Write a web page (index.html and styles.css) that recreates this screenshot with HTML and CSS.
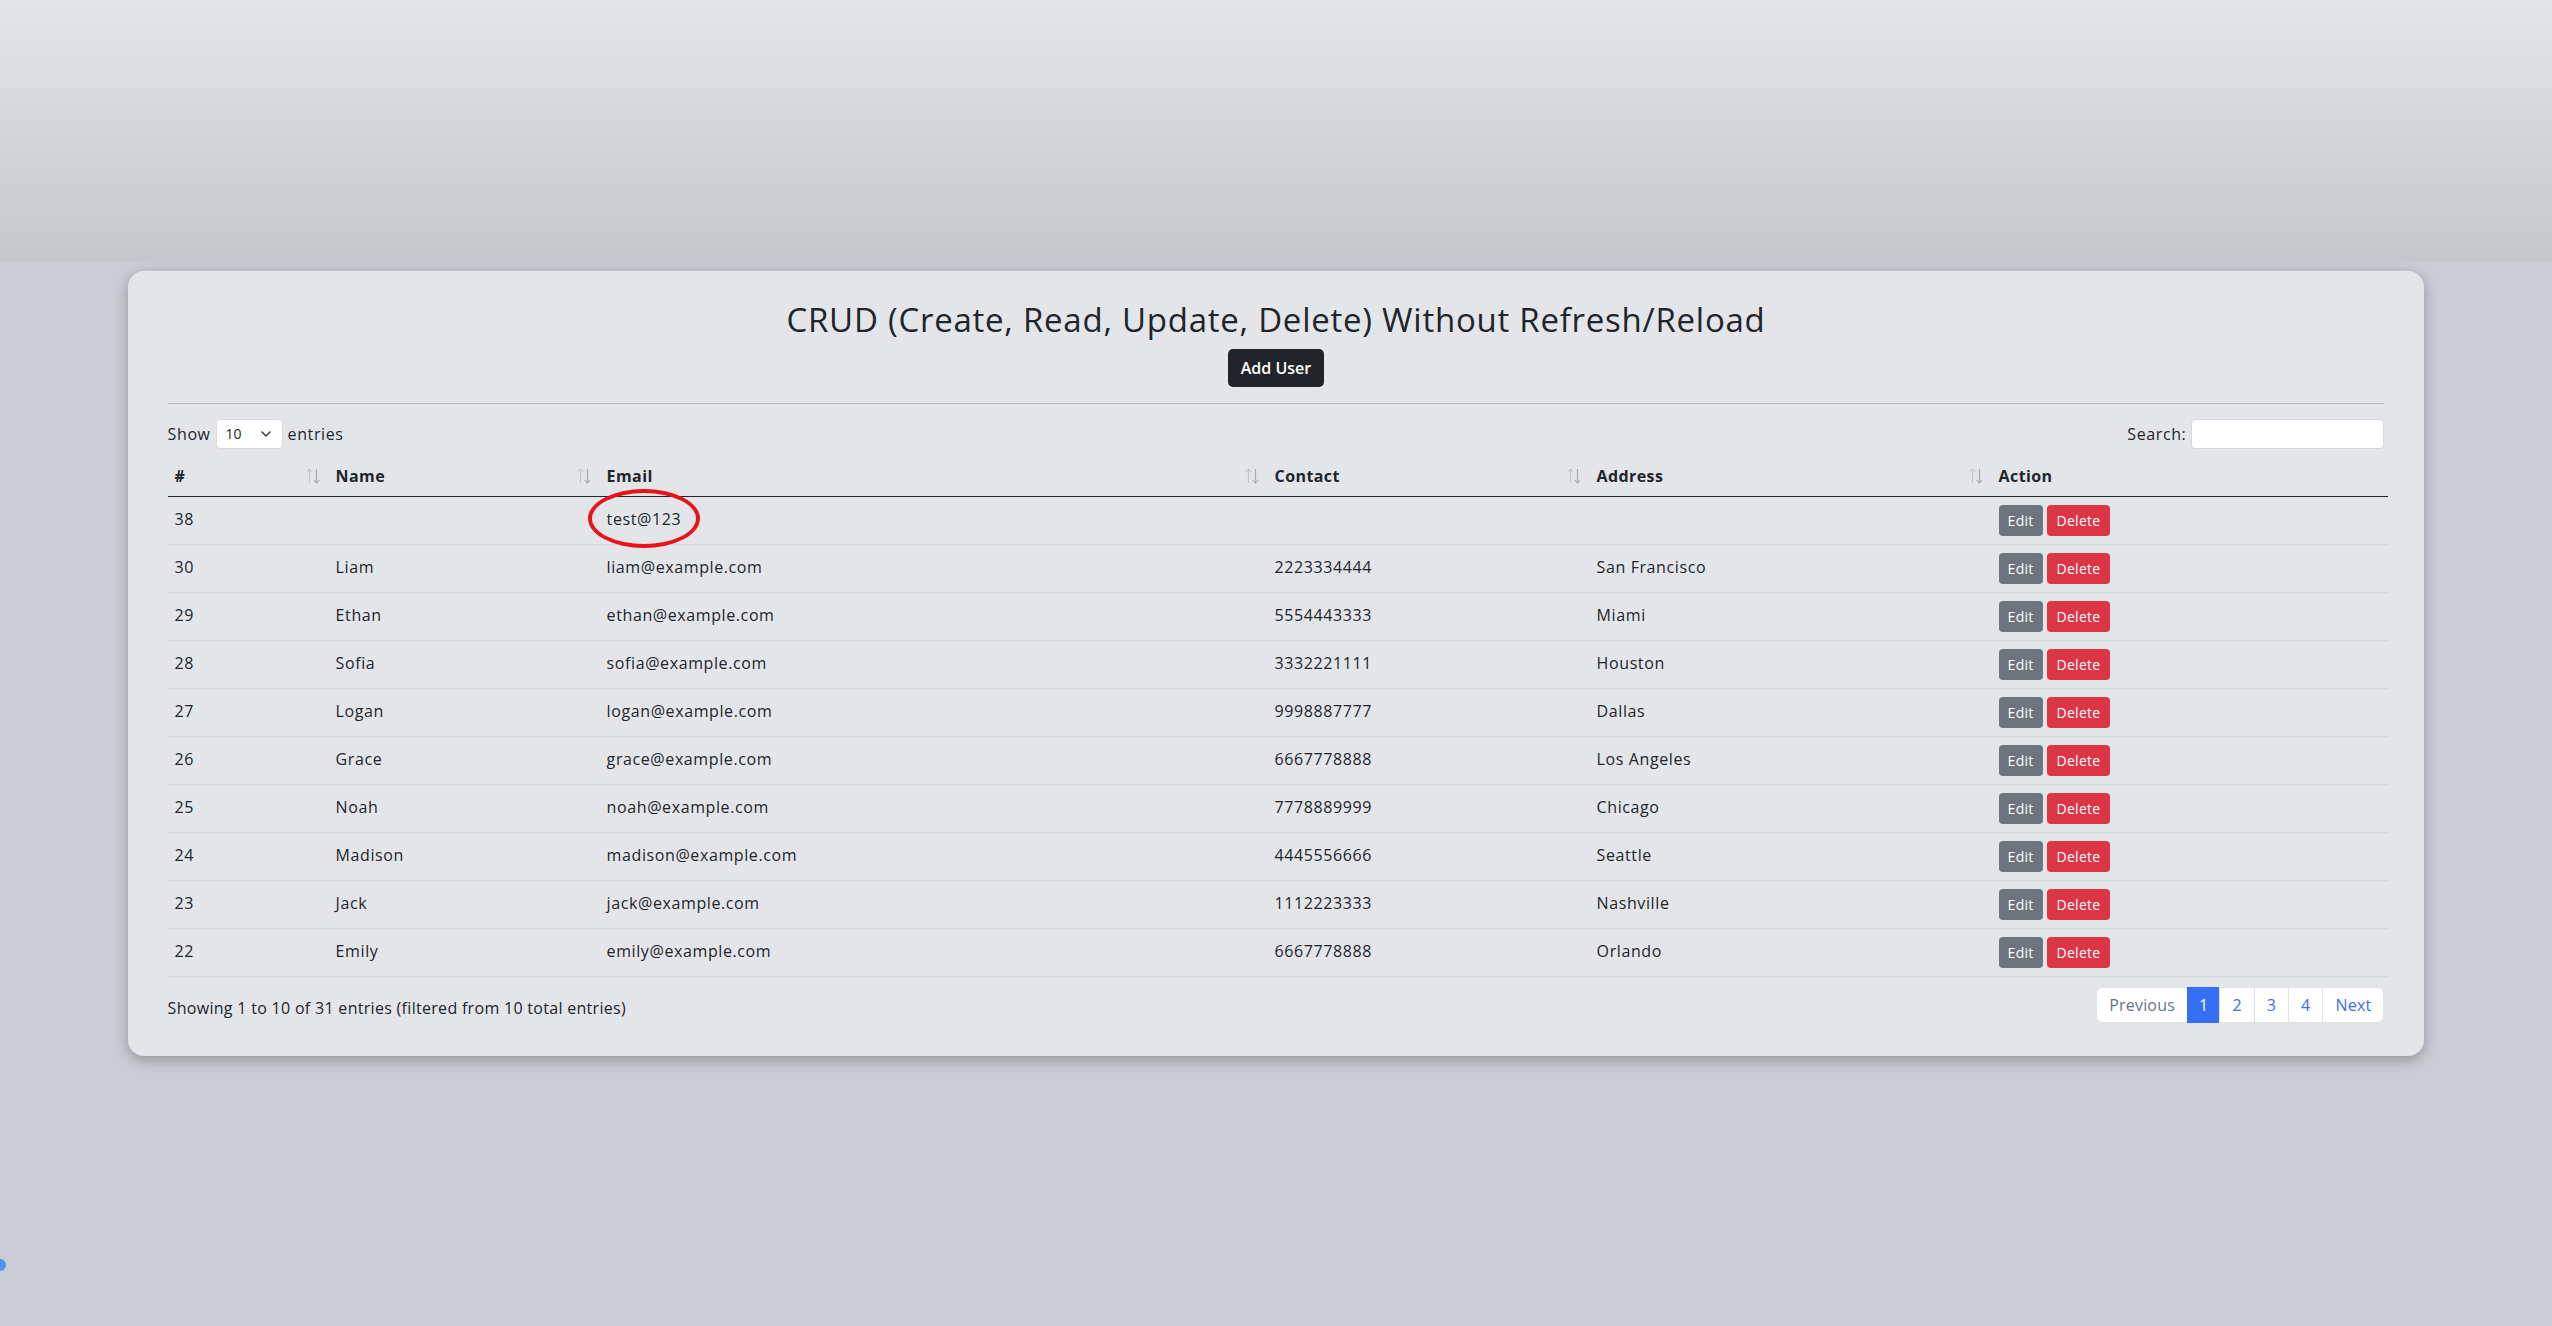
FILE: index.html
```html
<!DOCTYPE html>
<html lang="en">
<head>
<meta charset="utf-8">
<title>CRUD</title>
<link rel="stylesheet" href="styles.css">
</head>
<body>
<div class="card">
  <h2 class="title">CRUD (Create, Read, Update, Delete) Without Refresh/Reload</h2>
  <div class="add-wrap"><button class="btn btn-dark">Add User</button></div>
  <hr class="divider">
  <div class="controls">
    <label class="length">Show <span class="select"><span>10</span><svg width="12" height="8" viewBox="0 0 12 8"><path d="M2 2l4 4 4-4" fill="none" stroke="#343a40" stroke-width="1.5" stroke-linecap="round" stroke-linejoin="round"/></svg></span> entries</label>
    <label class="search">Search: <span class="search-input"></span></label>
  </div>
  <table class="table">
    <thead>
      <tr>
        <th class="c-id"><div class="th-in"><span>#</span><svg class="sort" width="16" height="18" viewBox="0 0 16 18"><path d="M4.5 2v14M1.8 4.8L4.5 2l2.7 2.8" fill="none" stroke="#c3c5ca" stroke-width="1.2"/><path d="M11.5 2v14M8.8 13.2l2.7 2.8 2.7-2.8" fill="none" stroke="#a9acb2" stroke-width="1.2"/></svg></div></th>
        <th class="c-name"><div class="th-in"><span>Name</span><svg class="sort" width="16" height="18" viewBox="0 0 16 18"><path d="M4.5 2v14M1.8 4.8L4.5 2l2.7 2.8" fill="none" stroke="#c3c5ca" stroke-width="1.2"/><path d="M11.5 2v14M8.8 13.2l2.7 2.8 2.7-2.8" fill="none" stroke="#a9acb2" stroke-width="1.2"/></svg></div></th>
        <th class="c-email"><div class="th-in"><span>Email</span><svg class="sort" width="16" height="18" viewBox="0 0 16 18"><path d="M4.5 2v14M1.8 4.8L4.5 2l2.7 2.8" fill="none" stroke="#c3c5ca" stroke-width="1.2"/><path d="M11.5 2v14M8.8 13.2l2.7 2.8 2.7-2.8" fill="none" stroke="#a9acb2" stroke-width="1.2"/></svg></div></th>
        <th class="c-contact"><div class="th-in"><span>Contact</span><svg class="sort" width="16" height="18" viewBox="0 0 16 18"><path d="M4.5 2v14M1.8 4.8L4.5 2l2.7 2.8" fill="none" stroke="#c3c5ca" stroke-width="1.2"/><path d="M11.5 2v14M8.8 13.2l2.7 2.8 2.7-2.8" fill="none" stroke="#a9acb2" stroke-width="1.2"/></svg></div></th>
        <th class="c-address"><div class="th-in"><span>Address</span><svg class="sort" width="16" height="18" viewBox="0 0 16 18"><path d="M4.5 2v14M1.8 4.8L4.5 2l2.7 2.8" fill="none" stroke="#c3c5ca" stroke-width="1.2"/><path d="M11.5 2v14M8.8 13.2l2.7 2.8 2.7-2.8" fill="none" stroke="#a9acb2" stroke-width="1.2"/></svg></div></th>
        <th class="c-action"><div class="th-in"><span>Action</span></div></th>
      </tr>
    </thead>
    <tbody>
      <tr><td>38</td><td></td><td><span class="marked">test@123<span class="circle"></span></span></td><td></td><td></td><td><button class="btn btn-sm btn-edit">Edit</button> <button class="btn btn-sm btn-del">Delete</button></td></tr>
      <tr><td>30</td><td>Liam</td><td>liam@example.com</td><td>2223334444</td><td>San Francisco</td><td><button class="btn btn-sm btn-edit">Edit</button> <button class="btn btn-sm btn-del">Delete</button></td></tr>
      <tr><td>29</td><td>Ethan</td><td>ethan@example.com</td><td>5554443333</td><td>Miami</td><td><button class="btn btn-sm btn-edit">Edit</button> <button class="btn btn-sm btn-del">Delete</button></td></tr>
      <tr><td>28</td><td>Sofia</td><td>sofia@example.com</td><td>3332221111</td><td>Houston</td><td><button class="btn btn-sm btn-edit">Edit</button> <button class="btn btn-sm btn-del">Delete</button></td></tr>
      <tr><td>27</td><td>Logan</td><td>logan@example.com</td><td>9998887777</td><td>Dallas</td><td><button class="btn btn-sm btn-edit">Edit</button> <button class="btn btn-sm btn-del">Delete</button></td></tr>
      <tr><td>26</td><td>Grace</td><td>grace@example.com</td><td>6667778888</td><td>Los Angeles</td><td><button class="btn btn-sm btn-edit">Edit</button> <button class="btn btn-sm btn-del">Delete</button></td></tr>
      <tr><td>25</td><td>Noah</td><td>noah@example.com</td><td>7778889999</td><td>Chicago</td><td><button class="btn btn-sm btn-edit">Edit</button> <button class="btn btn-sm btn-del">Delete</button></td></tr>
      <tr><td>24</td><td>Madison</td><td>madison@example.com</td><td>4445556666</td><td>Seattle</td><td><button class="btn btn-sm btn-edit">Edit</button> <button class="btn btn-sm btn-del">Delete</button></td></tr>
      <tr><td>23</td><td>Jack</td><td>jack@example.com</td><td>1112223333</td><td>Nashville</td><td><button class="btn btn-sm btn-edit">Edit</button> <button class="btn btn-sm btn-del">Delete</button></td></tr>
      <tr><td>22</td><td>Emily</td><td>emily@example.com</td><td>6667778888</td><td>Orlando</td><td><button class="btn btn-sm btn-edit">Edit</button> <button class="btn btn-sm btn-del">Delete</button></td></tr>
    </tbody>
  </table>
  <div class="footer">
    <div class="info">Showing 1 to 10 of 31 entries (filtered from 10 total entries)</div>
    <ul class="pagination">
      <li class="page disabled">Previous</li>
      <li class="page active">1</li>
      <li class="page">2</li>
      <li class="page">3</li>
      <li class="page">4</li>
      <li class="page">Next</li>
    </ul>
  </div>
</div>
<span class="dot"></span>
</body>
</html>
```
FILE: styles.css
```css
html, body {
  margin: 0;
  padding: 0;
}
body {
  min-height: 1326px;
  background-color: #c9ccd5;
  background-image: linear-gradient(to bottom, #e4e5e8 0px, #c6c7cc 262px, #c9ccd5 262px);
  background-repeat: no-repeat;
  background-size: 100% 262px;
  font-family: "Open Sans", "Liberation Sans", sans-serif;
  color: #212529;
  font-size: 16px;
  line-height: 1.5;
  letter-spacing: 0.6px;
  position: relative;
  overflow: hidden;
}
.card {
  width: 90%;
  box-sizing: border-box;
  margin: 271px auto 0;
  background: #e4e5e9;
  border-radius: 16px;
  box-shadow: 0 4px 14px rgba(0, 0, 0, 0.28);
  padding: 29px 40px 33px;
}
.title {
  margin: 0;
  text-align: center;
  font-size: 33px;
  font-weight: 400;
  line-height: 1.2;
  letter-spacing: 0.75px;
}
.add-wrap {
  display: flex;
  justify-content: center;
  margin-top: 9px;
}
.btn {
  font-family: inherit;
  letter-spacing: 0.3px;
  border: 1px solid transparent;
  border-radius: 5px;
  color: #fff;
  cursor: pointer;
}
.btn-dark {
  background: #212529;
  font-size: 16px;
  font-weight: 600;
  line-height: 24px;
  padding: 6px 12px;
  letter-spacing: 0;
}
.divider {
  margin: 16px 0 0;
  border: 0;
  border-top: 1px solid #b6b7bb;
}
.controls {
  display: flex;
  justify-content: space-between;
  align-items: center;
  margin-top: 15px;
  height: 30px;
}
.length, .search {
  display: flex;
  align-items: center;
  gap: 5px;
}
.select {
  display: inline-flex;
  align-items: center;
  justify-content: space-between;
  box-sizing: border-box;
  width: 67px;
  height: 30px;
  padding: 0 10px 0 9px;
  background: #fff;
  border: 1px solid #d9dadd;
  border-radius: 4px;
  font-size: 14px;
  letter-spacing: 0;
}
.search-input {
  display: inline-block;
  box-sizing: border-box;
  width: 193px;
  height: 30px;
  background: #fff;
  border: 1px solid #d6d7da;
  border-radius: 4px;
}
.table {
  width: calc(100% + 4px);
  margin-top: 7px;
  border-collapse: collapse;
  table-layout: fixed;
  vertical-align: top;
}
.table th {
  box-sizing: border-box;
  text-align: left;
  font-weight: 700;
  padding: 8px 8px 8px 7px;
  border-bottom: 1px solid #212529;
  line-height: 24px;
  letter-spacing: 0.4px;
}
.th-in {
  display: flex;
  justify-content: space-between;
  align-items: center;
}
.sort {
  display: block;
}
.c-id { width: 161px; }
.c-name { width: 271px; }
.c-email { width: 668px; }
.c-contact { width: 322px; }
.c-address { width: 402px; }
.table td {
  padding: 5px 8px 8px 7px;
  border-bottom: 1px solid #d7d8dc;
  line-height: 24px;
  height: 34px;
  box-sizing: content-box;
}
.marked {
  position: relative;
  display: inline-block;
}
.circle {
  position: absolute;
  left: 50%;
  top: 50%;
  width: 104px;
  height: 51px;
  margin-left: -56px;
  margin-top: -30px;
  border: 4px solid #e8141c;
  border-radius: 50%;
}
.btn-sm {
  font-size: 14px;
  line-height: 21px;
  padding: 4px 8px;
  margin-top: 3px;
  border-radius: 4px;
  font-weight: 500;
}
.btn-edit { background: #6c757d; }
.btn-del { background: #dc3545; }
.footer {
  display: flex;
  justify-content: space-between;
  align-items: center;
  margin-top: 10px;
}
.info {
  font-size: 16px;
  letter-spacing: 0.3px;
  position: relative;
  top: 3px;
}
.pagination {
  display: flex;
  list-style: none;
  margin: 0;
  padding: 0;
  font-size: 16px;
  letter-spacing: 0.2px;
}
.page {
  background: #fff;
  color: #3c6cf0;
  padding: 5px 12px;
  line-height: 24px;
  border: 1px solid #dee2e6;
  margin-left: -1px;
}
.page:first-child {
  border-radius: 6px 0 0 6px;
  margin-left: 0;
}
.page:last-child {
  border-radius: 0 6px 6px 0;
}
.page.disabled {
  color: #6c757d;
}
.page.active {
  background: #3470f6;
  border-color: #3470f6;
  color: #fff;
  padding: 5px 11px;
}
.dot {
  position: absolute;
  left: -6px;
  top: 1259px;
  width: 12px;
  height: 12px;
  border-radius: 50%;
  background: #4f8ff7;
}
```
